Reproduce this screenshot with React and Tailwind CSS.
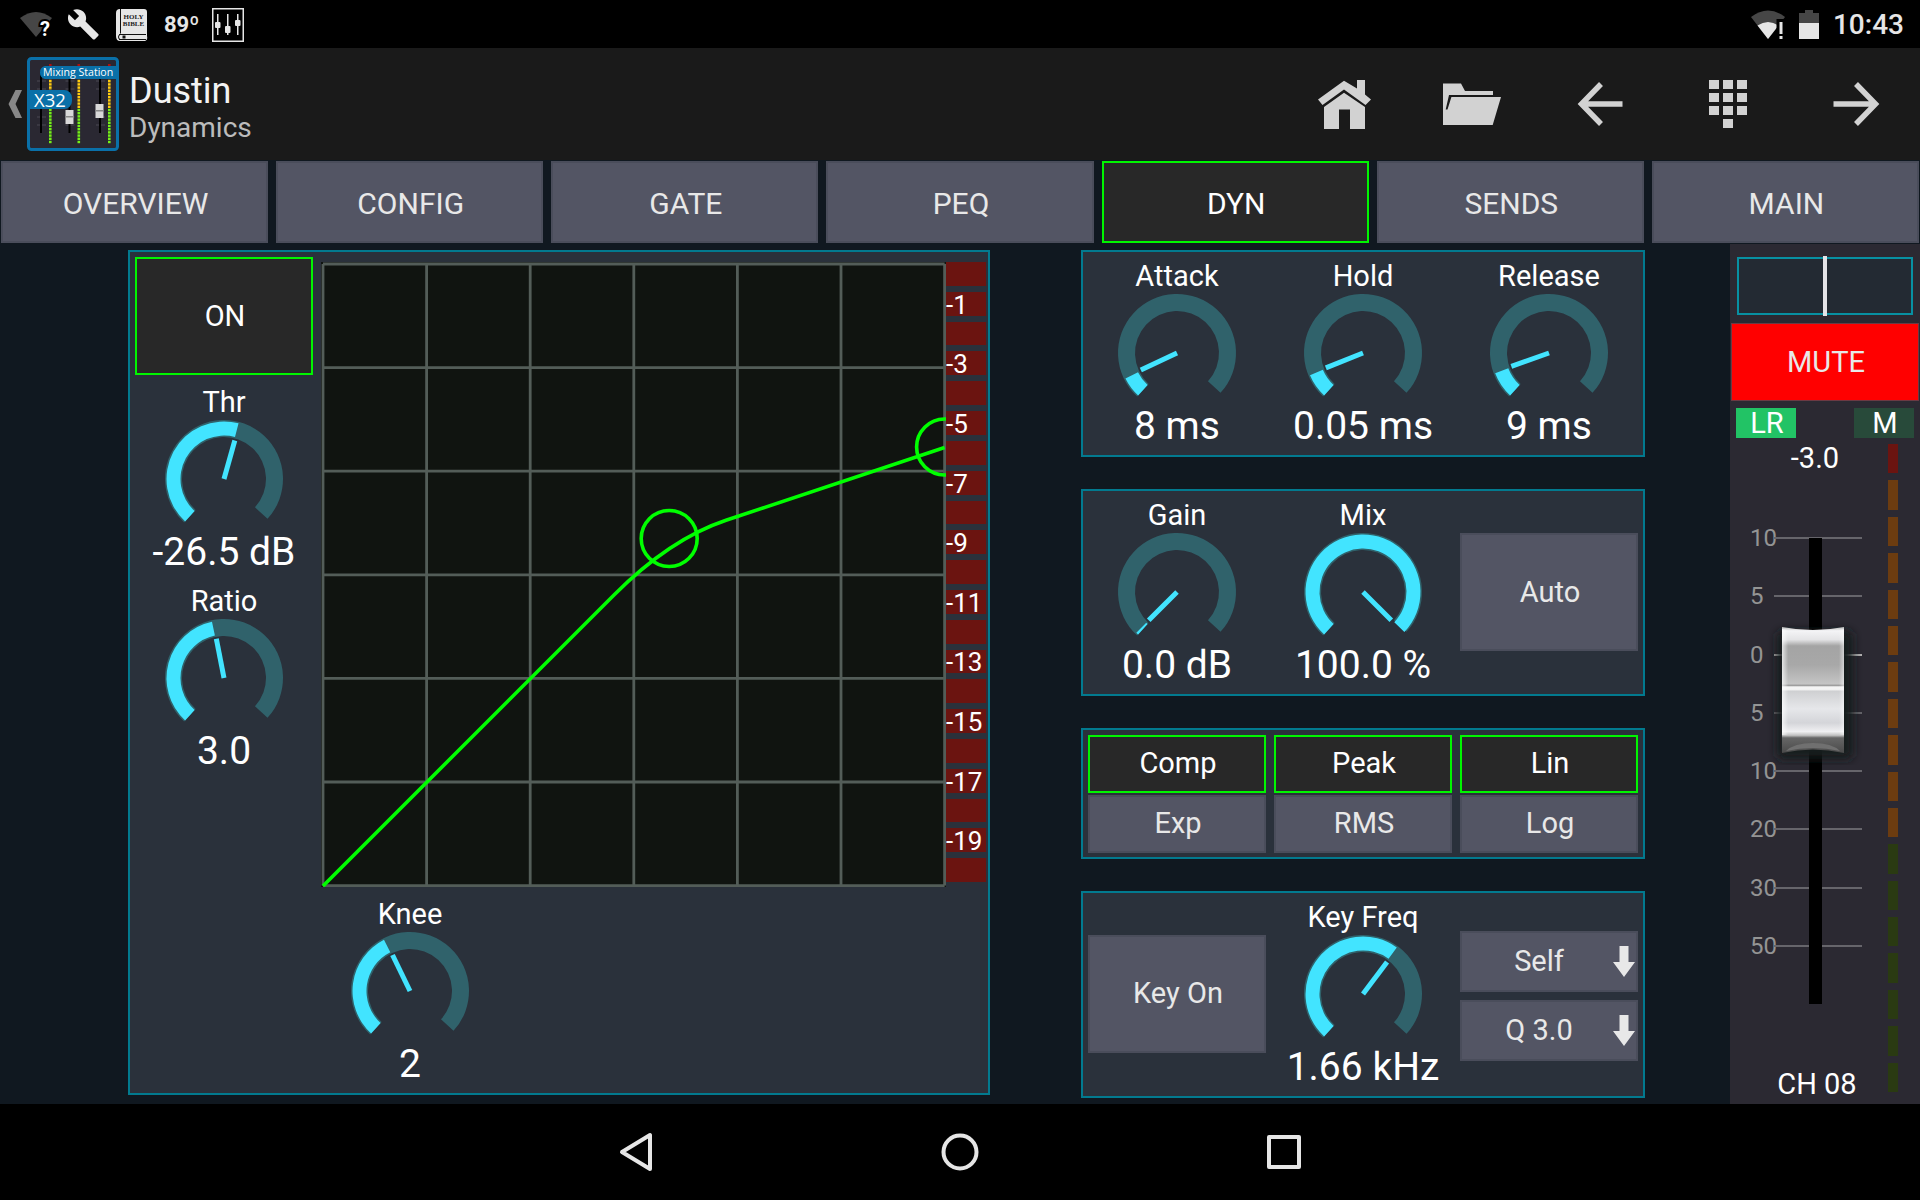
import { useState } from 'react';
import clsx from 'clsx';

const TABS = ['OVERVIEW', 'CONFIG', 'GATE', 'PEQ', 'DYN', 'SENDS', 'MAIN'];
const SCALE = ['10', '5', '0', '5', '10', '20', '30', '50'];

const point = (angle, radius) => {
  const rad = (angle * Math.PI) / 180;
  return `${(radius * Math.cos(rad)).toFixed(2)} ${(radius * Math.sin(rad)).toFixed(2)}`;
};

// ring segment from one angle to another, clockwise, in degrees
const ring = (from, to, inner, outer) => {
  const large = to - from > 180 ? 1 : 0;
  return `M${point(from, outer)}A${outer} ${outer} 0 ${large} 1 ${point(to, outer)}L${point(to, inner)}A${inner} ${inner} 0 ${large} 0 ${point(from, inner)}Z`;
};

const Knob = ({ label, value, level }) => {
  const angle = 135 + level * 270;
  const end = level === 0 ? 135 : angle - 1;
  return (
    <label className="relative flex flex-col items-center text-white">
      <span className="text-[29px] leading-[36px]">{label}</span>
      <svg viewBox="-59 -59 118 110" className="w-[118px] h-[110px] overflow-visible">
        <path d={ring(132.5, 402.5, 42, 59)} fill="#30626b" />
        <path d={ring(132.5, end, 43.5, 57.5)} fill="#42e4ff" />
        <path d={`M0 0L${point(angle, 40)}`} stroke="#42e4ff" strokeWidth="5" />
      </svg>
      <span className="text-[39px] leading-[44px] whitespace-nowrap">{value}</span>
      <input
        type="range"
        min="0"
        max="1"
        step="0.01"
        defaultValue={level}
        aria-valuetext={value}
        className="absolute inset-0 w-full h-full opacity-0 cursor-pointer"
      />
    </label>
  );
};

const Panel = ({ className, children }) => (
  <section className={clsx('border-2 border-[#027a8f] bg-[#2a313b]', className)}>{children}</section>
);

const PadButton = ({ active, className, children, ...rest }) => (
  <button
    type="button"
    aria-pressed={!!active}
    className={clsx(
      'border-2 pl-0.5',
      active ? 'border-[#00f500] bg-[#282828] text-white' : 'border-[#4a4d5b] bg-[#535564] text-[#e8e8e8]',
      className
    )}
    {...rest}
  >
    {children}
  </button>
);

const Switch = ({ options }) => {
  const [selected, setSelected] = useState(options[0]);
  return (
    <div className="flex flex-col gap-0.5">
      {options.map((option) => (
        <PadButton
          key={option}
          active={option === selected}
          onClick={() => setSelected(option)}
          className="h-[58px] text-[29px]"
        >
          {option}
        </PadButton>
      ))}
    </div>
  );
};

const Dropdown = ({ label, options }) => (
  <div className="relative">
    <select
      aria-label={label}
      className="block w-full h-[61px] appearance-none border-2 border-[#4a4d5b] bg-[#535564] pr-5 text-[29px] text-[#e8e8e8] [text-align-last:center]"
    >
      {options.map((option) => (
        <option key={option}>{option}</option>
      ))}
    </select>
    <svg viewBox="0 0 22 31" className="absolute right-[3px] top-[15px] w-[22px] h-[31px] pointer-events-none">
      <path d="M6.5 0h9v16H22L11 31 0 16h6.5z" fill="#e8e8e8" />
    </svg>
  </div>
);

const StatusBar = () => (
  <div className="flex items-center justify-between h-12 pt-0.5 pl-5 pr-4 bg-black text-[#e6e6e6]">
    <div className="flex items-center gap-4">
      <svg viewBox="0 0 32 32" className="w-8 h-8">
        <path d="M0 9Q16 -3 32 9L16 28Z" fill="#464646" />
        <text x="20" y="27" fontSize="20" fontWeight="700" fill="#fff" stroke="#000" strokeWidth="4" paintOrder="stroke">
          ?
        </text>
      </svg>
      <svg viewBox="1 1 23 23" className="w-8 h-8" fill="#e6e6e6">
        <path d="M22.7 19l-9.1-9.1c.9-2.3.4-5-1.5-6.9-2-2-5-2.4-7.4-1.3L9 6 6 9 1.6 4.7C.4 7.1.9 10.1 2.9 12.1c1.9 1.9 4.6 2.4 6.9 1.5l9.1 9.1c.4.4 1 .4 1.4 0l2.3-2.3c.5-.4.5-1.1.1-1.4z" />
      </svg>
      <svg viewBox="0 0 32 32" className="w-8 h-8">
        <path d="M4 0h24q3 0 3 3v24q1 4-2 5H4q-4 0-4-5V4q0-4 4-4z" fill="#e6e6e6" />
        <path d="M4.5 0v24.5M3 25.5h27M3 30.5h27M2.5 28q0-2.5 2-2.5M2.5 28q0 2.5 2 2.5" stroke="#111" strokeWidth="1" fill="none" />
        <path d="M6.5 26.5h3v3h-3z" fill="#111" />
        <g fill="#222" fontFamily="Liberation Serif, serif" fontWeight="700" fontSize="7" textAnchor="middle">
          <text x="17.5" y="9.5">HOLY</text>
          <text x="17.5" y="16.5">BIBLE</text>
        </g>
      </svg>
      <span className="w-8 text-[22px] leading-8 font-bold">89º</span>
      <svg viewBox="0 0 32 34" className="w-8 h-[34px]" fill="#e6e6e6">
        <rect x="0.75" y="0.75" width="30.5" height="32.5" fill="none" stroke="#e6e6e6" strokeWidth="1.5" />
        <path d="M5 6h1.5v21H5zM15 6h1.5v21H15zM25 6h1.5v21H25z" />
        <rect x="3" y="14" width="5.5" height="6" rx="1" />
        <rect x="13" y="18" width="5.5" height="7" rx="1" />
        <rect x="23" y="12" width="5.5" height="6" rx="1" />
      </svg>
    </div>
    <div className="flex items-center gap-3.5">
      <svg viewBox="0 0 34 30" className="w-[34px] h-[30px]">
        <path d="M0 7Q17 -6 34 7L17 29Z" fill="#464646" />
        <path d="M6.5 15.5Q17 8.500 27.5 15.5L17 29Z" fill="#e6e6e6" />
        <path d="M25.5 9h9v21h-9z" fill="#000" />
        <path d="M28.5 12h3v12h-3zM28.5 26h3v3h-3z" fill="#e6e6e6" />
      </svg>
      <svg viewBox="0 0 20 30" className="w-5 h-[30px]">
        <path d="M6 0h8v3h6v11H0V3h6z" fill="#464646" />
        <path d="M0 13h20v16H0z" fill="#e6e6e6" />
      </svg>
      <span className="text-[28px] leading-8 font-medium">10:43</span>
    </div>
  </div>
);

const LED_Y = Array.from({ length: 25 }, (_, i) => 7 + i * 3.2);

const AppLogo = () => (
  <svg viewBox="0 0 92 94" className="w-[92px] h-[94px]">
    <rect x="1.5" y="1.5" width="89" height="91" rx="3" fill="#2a2832" stroke="#0a70a8" strokeWidth="3" />
    {[14, 42.5, 73].map((x) => (
      <g key={x}>
        <path d={`M${x - 4} 24h9M${x - 4} 32h9M${x - 4} 60h9M${x - 4} 68h9`} stroke="#4a4953" />
        <path d={`M${x} 14v62`} stroke="#000" strokeWidth="2" />
        {LED_Y.map((y) => (
          <rect
            key={y}
            x={x + 8}
            y={y}
            width="2.6"
            height="2.4"
            fill={y < 10 ? '#b01010' : y < 50 ? '#ffcc10' : '#74f018'}
          />
        ))}
      </g>
    ))}
    <rect x="38.5" y="53" width="8" height="14" fill="#d8d8d8" />
    <rect x="38.5" y="59" width="8" height="1.5" fill="#888" />
    <rect x="68.5" y="47" width="8" height="14" fill="#d8d8d8" />
    <rect x="68.5" y="53" width="8" height="1.5" fill="#888" />
    <path d="M18 9H90V22H18a6 6 0 0 1-5-6.5A6 6 0 0 1 18 9z" fill="#0a70a8" />
    <path d="M2 33H37a8 8 0 0 1 8 8v3a8 8 0 0 1-8 8H2z" fill="#0a70a8" />
    <g fill="#fff" fontFamily="Open Sans, sans-serif">
      <text x="16" y="19" fontSize="10.6">Mixing Station</text>
      <text x="7" y="50" fontSize="18.5">X32</text>
    </g>
  </svg>
);

const HEADER_ACTIONS = [
  {
    name: 'Home',
    icon: (
      <g>
        <path d="M28 8.700L2 27.5l4.5 5.5L28 17.5 49.5 33l5.5-5.5-6-5V8h-8v8.500z" />
        <path d="M28 20.7L8 35v22h15V37.5h11V57h15V35z" />
      </g>
    ),
  },
  {
    name: 'Open folder',
    icon: <path d="M-1 11.5h18l4 7.5h28v4H5L1.7 37.5h1.8L7.4 25H57l-8.3 28H-1z" />,
  },
  {
    name: 'Previous channel',
    icon: <path d="M29 12L9.5 32 29 52M9.5 32H50.5" fill="none" stroke="#d2d2d2" strokeWidth="5.5" />,
  },
  {
    name: 'Channel list',
    icon: (
      <path d="M9 8h10v9H9zM23 8h10v9H23zM37 8h10v9H37zM9 21h10v9H9zM23 21h10v9H23zM37 21h10v9H37zM9 34h10v9H9zM23 34h10v9H23zM37 34h10v9H37zM23 47h10v9H23z" />
    ),
  },
  {
    name: 'Next channel',
    icon: <path d="M28 12L47.5 32 28 52M47.5 32H5.5" fill="none" stroke="#d2d2d2" strokeWidth="5.5" />,
  },
];

const Header = () => (
  <header className="flex items-center h-28 bg-[#1a1a1a]">
    <button type="button" aria-label="Back" className="flex items-center pl-2">
      <svg viewBox="0 0 19 28" className="w-[19px] h-7">
        <path d="M7.5 0H14L7.5 14 14 28H7.5L0.5 14z" fill="#888" />
      </svg>
      <AppLogo />
    </button>
    <div className="ml-2.5 flex-1 pt-2">
      <h1 className="text-[36px] leading-[40px] text-[#f3f3f3]">Dustin</h1>
      <p className="text-[28px] leading-[34px] text-[#bcbcbc]">Dynamics</p>
    </div>
    {HEADER_ACTIONS.map(({ name, icon }) => (
      <button key={name} type="button" aria-label={name} className="flex w-32 justify-center">
        <svg viewBox="0 0 56 64" className="w-14 h-16 overflow-visible" fill="#d2d2d2">
          {icon}
        </svg>
      </button>
    ))}
  </header>
);

// 6 x 6 grid with the transfer curve and its two drag handles
const GRID = [0, 1, 2, 3, 4, 5, 6].map((i) => 2 + i * 103.6);

const Graph = () => (
  <svg viewBox="0 0 625 625" className="block flex-1 min-w-0 bg-[#101410]">
    {GRID.map((p) => (
      <path key={p} d={`M${p} 2V623.6M2 ${p}H623.6`} stroke="#535d58" strokeWidth="2.8" />
    ))}
    <g fill="none" stroke="#00ff00" strokeWidth="3.6">
      <path d="M2 624L293 333Q349 277 405 258.3L623.6 185.5" />
      <circle cx="348.2" cy="276.5" r="28" />
      <circle cx="623.6" cy="185" r="28" />
    </g>
  </svg>
);

const ReductionMeter = () => (
  <div className="flex w-10 flex-col gap-1.5 pb-[5px]">
    {Array.from({ length: 21 }, (_, i) => (
      <div key={i} className="flex flex-1 items-center bg-[#6b1410] pt-0.5 text-[26px] leading-[20px] text-white">
        {i % 2 === 1 && <span>-{i}</span>}
      </div>
    ))}
  </div>
);

const FaderCap = () => (
  <svg viewBox="0 0 100 150" className="w-[100px] h-[150px]">
    <defs>
      <linearGradient id="cap" x1="0" y1="0" x2="0" y2="1">
        <stop offset="0" stopColor="#b8b8b8" />
        <stop offset="0.03" stopColor="#f4f4f6" />
        <stop offset="0.1" stopColor="#e4e4e6" />
        <stop offset="0.15" stopColor="#a4a4a4" />
        <stop offset="0.3" stopColor="#a8a8a8" />
        <stop offset="0.45" stopColor="#c4c4c4" />
        <stop offset="0.465" stopColor="#9c9c9c" />
        <stop offset="0.475" stopColor="#f4f4f4" />
        <stop offset="0.495" stopColor="#f4f4f4" />
        <stop offset="0.51" stopColor="#cfd0d2" />
        <stop offset="0.65" stopColor="#e6e7ea" />
        <stop offset="0.76" stopColor="#d4d5d9" />
        <stop offset="0.83" stopColor="#f0f0f2" />
        <stop offset="0.86" stopColor="#c0c0c0" />
        <stop offset="0.88" stopColor="#666" />
        <stop offset="1" stopColor="#4a4a4a" />
      </linearGradient>
      <linearGradient id="edge">
        <stop offset="0" stopColor="#fff" stopOpacity="0.7" />
        <stop offset="0.1" stopColor="#fff" stopOpacity="0" />
        <stop offset="0.92" stopColor="#fff" stopOpacity="0" />
        <stop offset="1" stopColor="#fff" stopOpacity="0.5" />
      </linearGradient>
      <filter id="soft" x="-30%" y="-30%" width="160%" height="160%">
        <feGaussianBlur stdDeviation="5" />
      </filter>
    </defs>
    <rect x="13" y="16" width="76" height="128" rx="6" fill="#171a1c" filter="url(#soft)" />
    <path d="M18 12Q49 18 80 12V138Q49 131 18 138z" fill="url(#cap)" />
    <path d="M18 14Q49 20 80 14V120H18z" fill="url(#edge)" />
    <path d="M22 136Q30 128 49 128T76 136Q49 130 22 136z" fill="#707070" />
  </svg>
);

const Fader = ({ position }) => (
  <div className="relative my-[62px] flex-1 grid grid-rows-8">
    {SCALE.map((mark, i) => (
      <div key={i} className="flex items-start pl-5">
        <span className="-mt-3 w-6 text-[24px] leading-6 text-[#949494]">{mark}</span>
        <span className={clsx('h-0.5 w-[88px] -mt-px', mark === '0' ? 'bg-[#b4b4b4]' : 'bg-[#66656b]')} />
      </div>
    ))}
    <div className="absolute inset-y-0 left-[79px] w-[13px] bg-black" />
    <div className="absolute left-[34px] -translate-y-1/2" style={{ top: `${position}%` }}>
      <FaderCap />
    </div>
    <input
      type="range"
      aria-label="Channel level"
      defaultValue={100 - position}
      className="absolute inset-0 w-full h-full opacity-0 [writing-mode:vertical-lr] [direction:rtl]"
    />
  </div>
);

const LevelMeter = () => (
  <div className="mt-1.5 mb-3 flex w-2.5 flex-col gap-[7px]">
    {Array.from({ length: 18 }, (_, i) => (
      <div
        key={i}
        className={clsx('flex-1', i === 0 ? 'bg-[#6b1410]' : i < 11 ? 'bg-[#6c3c10]' : 'bg-[#2a3a12]')}
      />
    ))}
  </div>
);

const ChannelStrip = () => (
  <aside className="mt-px flex w-[190px] flex-col bg-[#2b2932] text-white">
    <label className="relative mx-[7px] mt-[13px] flex h-[58px] justify-center border-2 border-[#0890a2] bg-[#232a33]">
      <span className="-my-[3px] w-1 bg-[#e4e4e8]" />
      <input type="range" aria-label="Pan" className="absolute inset-0 w-full h-full opacity-0" />
    </label>
    <button
      type="button"
      className="mx-px mt-2 h-[78px] border border-[#6b3a44] bg-[#ff0000] pt-0.5 pl-0.5 text-[29px] text-[#e8e8e8]"
    >
      MUTE
    </button>
    <div className="mx-1.5 mt-[7px] flex justify-between text-[29px] leading-[30px]">
      <button type="button" className="h-[30px] w-15 bg-[#22c365] pl-0.5">LR</button>
      <button type="button" className="h-[30px] w-15 bg-[#284a3a] pl-0.5">M</button>
    </div>
    <div className="flex flex-1">
      <div className="flex w-[158px] flex-col">
        <span className="mt-0.5 pl-3 text-center text-[29px] leading-[36px]">-3.0</span>
        <Fader position={32.6} />
        <span className="mb-0.5 pl-4 text-center text-[29px] leading-[36px]">CH 08</span>
      </div>
      <LevelMeter />
    </div>
  </aside>
);

const NavBar = () => (
  <nav className="flex h-24 items-center justify-center gap-[268px] bg-black">
    <button type="button" aria-label="Back" className="w-14 flex justify-center">
      <svg viewBox="0 0 40 40" className="w-10 h-10" fill="none" stroke="#e6e6e6" strokeWidth="4" strokeLinejoin="round">
        <path d="M34 3V37L6 20z" />
      </svg>
    </button>
    <button type="button" aria-label="Home" className="w-14 flex justify-center">
      <svg viewBox="0 0 40 40" className="w-10 h-10" fill="none" stroke="#e6e6e6" strokeWidth="4">
        <circle cx="20" cy="20" r="16.5" />
      </svg>
    </button>
    <button type="button" aria-label="Recent apps" className="w-14 flex justify-center">
      <svg viewBox="0 0 40 40" className="w-10 h-10" fill="none" stroke="#e6e6e6" strokeWidth="4" strokeLinejoin="round">
        <rect x="5" y="5" width="30" height="30" />
      </svg>
    </button>
  </nav>
);

const App = () => {
  const [tab, setTab] = useState('DYN');
  const [on, setOn] = useState(true);

  return (
    <div className="flex min-h-screen flex-col bg-[#101820] font-['Roboto',sans-serif]">
      <StatusBar />
      <Header />

      <div className="grid grid-cols-7 gap-2 px-px pt-px">
        {TABS.map((name) => (
          <PadButton
            key={name}
            active={name === tab}
            onClick={() => setTab(name)}
            className="h-[82px] pt-0.5 text-[30px]"
          >
            {name}
          </PadButton>
        ))}
      </div>

      <main className="flex flex-1">
        <div className="grid flex-1 grid-cols-[862fr_564fr] items-start gap-x-[91px] pl-32 pr-[85px] pt-[7px]">
          {/* Threshold, ratio, knee and the curve */}
          <Panel className="flex gap-2 pt-[5px] pb-[7px] pl-[5px] pr-0.5">
            <div className="flex w-[178px] flex-col gap-[9px]">
              <PadButton active={on} onClick={() => setOn(!on)} className="h-[118px] pt-0.5 text-[29px]">
                ON
              </PadButton>
              <Knob label="Thr" value="-26.5 dB" level={0.558} />
              <Knob label="Ratio" value="3.0" level={0.459} />
            </div>
            <div className="flex flex-1 flex-col gap-[9px] pt-[5px]">
              <div className="flex">
                <Graph />
                <ReductionMeter />
              </div>
              <div className="w-[178px]">
                <Knob label="Knee" value="2" level={0.404} />
              </div>
            </div>
          </Panel>

          <div className="flex flex-col gap-8">
            <Panel className="grid grid-cols-3 gap-2 px-[5px] pt-1.5 pb-[7px]">
              <Knob label="Attack" value="8 ms" level={0.073} />
              <Knob label="Hold" value="0.05 ms" level={0.086} />
              <Knob label="Release" value="9 ms" level={0.094} />
            </Panel>

            <Panel className="grid grid-cols-3 gap-2 px-[5px] pt-1.5 pb-[7px]">
              <Knob label="Gain" value="0.0 dB" level={0} />
              <Knob label="Mix" value="100.0 %" level={1} />
              <PadButton className="mt-9 h-[118px] pt-0.5 text-[29px]">Auto</PadButton>
            </Panel>

            <Panel className="grid grid-cols-3 gap-2 px-[5px] pt-[5px] pb-1">
              <Switch options={['Comp', 'Exp']} />
              <Switch options={['Peak', 'RMS']} />
              <Switch options={['Lin', 'Log']} />
            </Panel>

            <Panel className="grid grid-cols-3 gap-2 px-[5px] pt-1.5 pb-[7px]">
              <PadButton className="mt-9 h-[118px] text-[29px]">Key On</PadButton>
              <Knob label="Key Freq" value="1.66 kHz" level={0.637} />
              <div className="mt-8 flex flex-col gap-2">
                <Dropdown label="Key source" options={['Self']} />
                <Dropdown label="Filter type" options={['Q 3.0']} />
              </div>
            </Panel>
          </div>
        </div>

        <ChannelStrip />
      </main>

      <NavBar />
    </div>
  );
};

export default App;
